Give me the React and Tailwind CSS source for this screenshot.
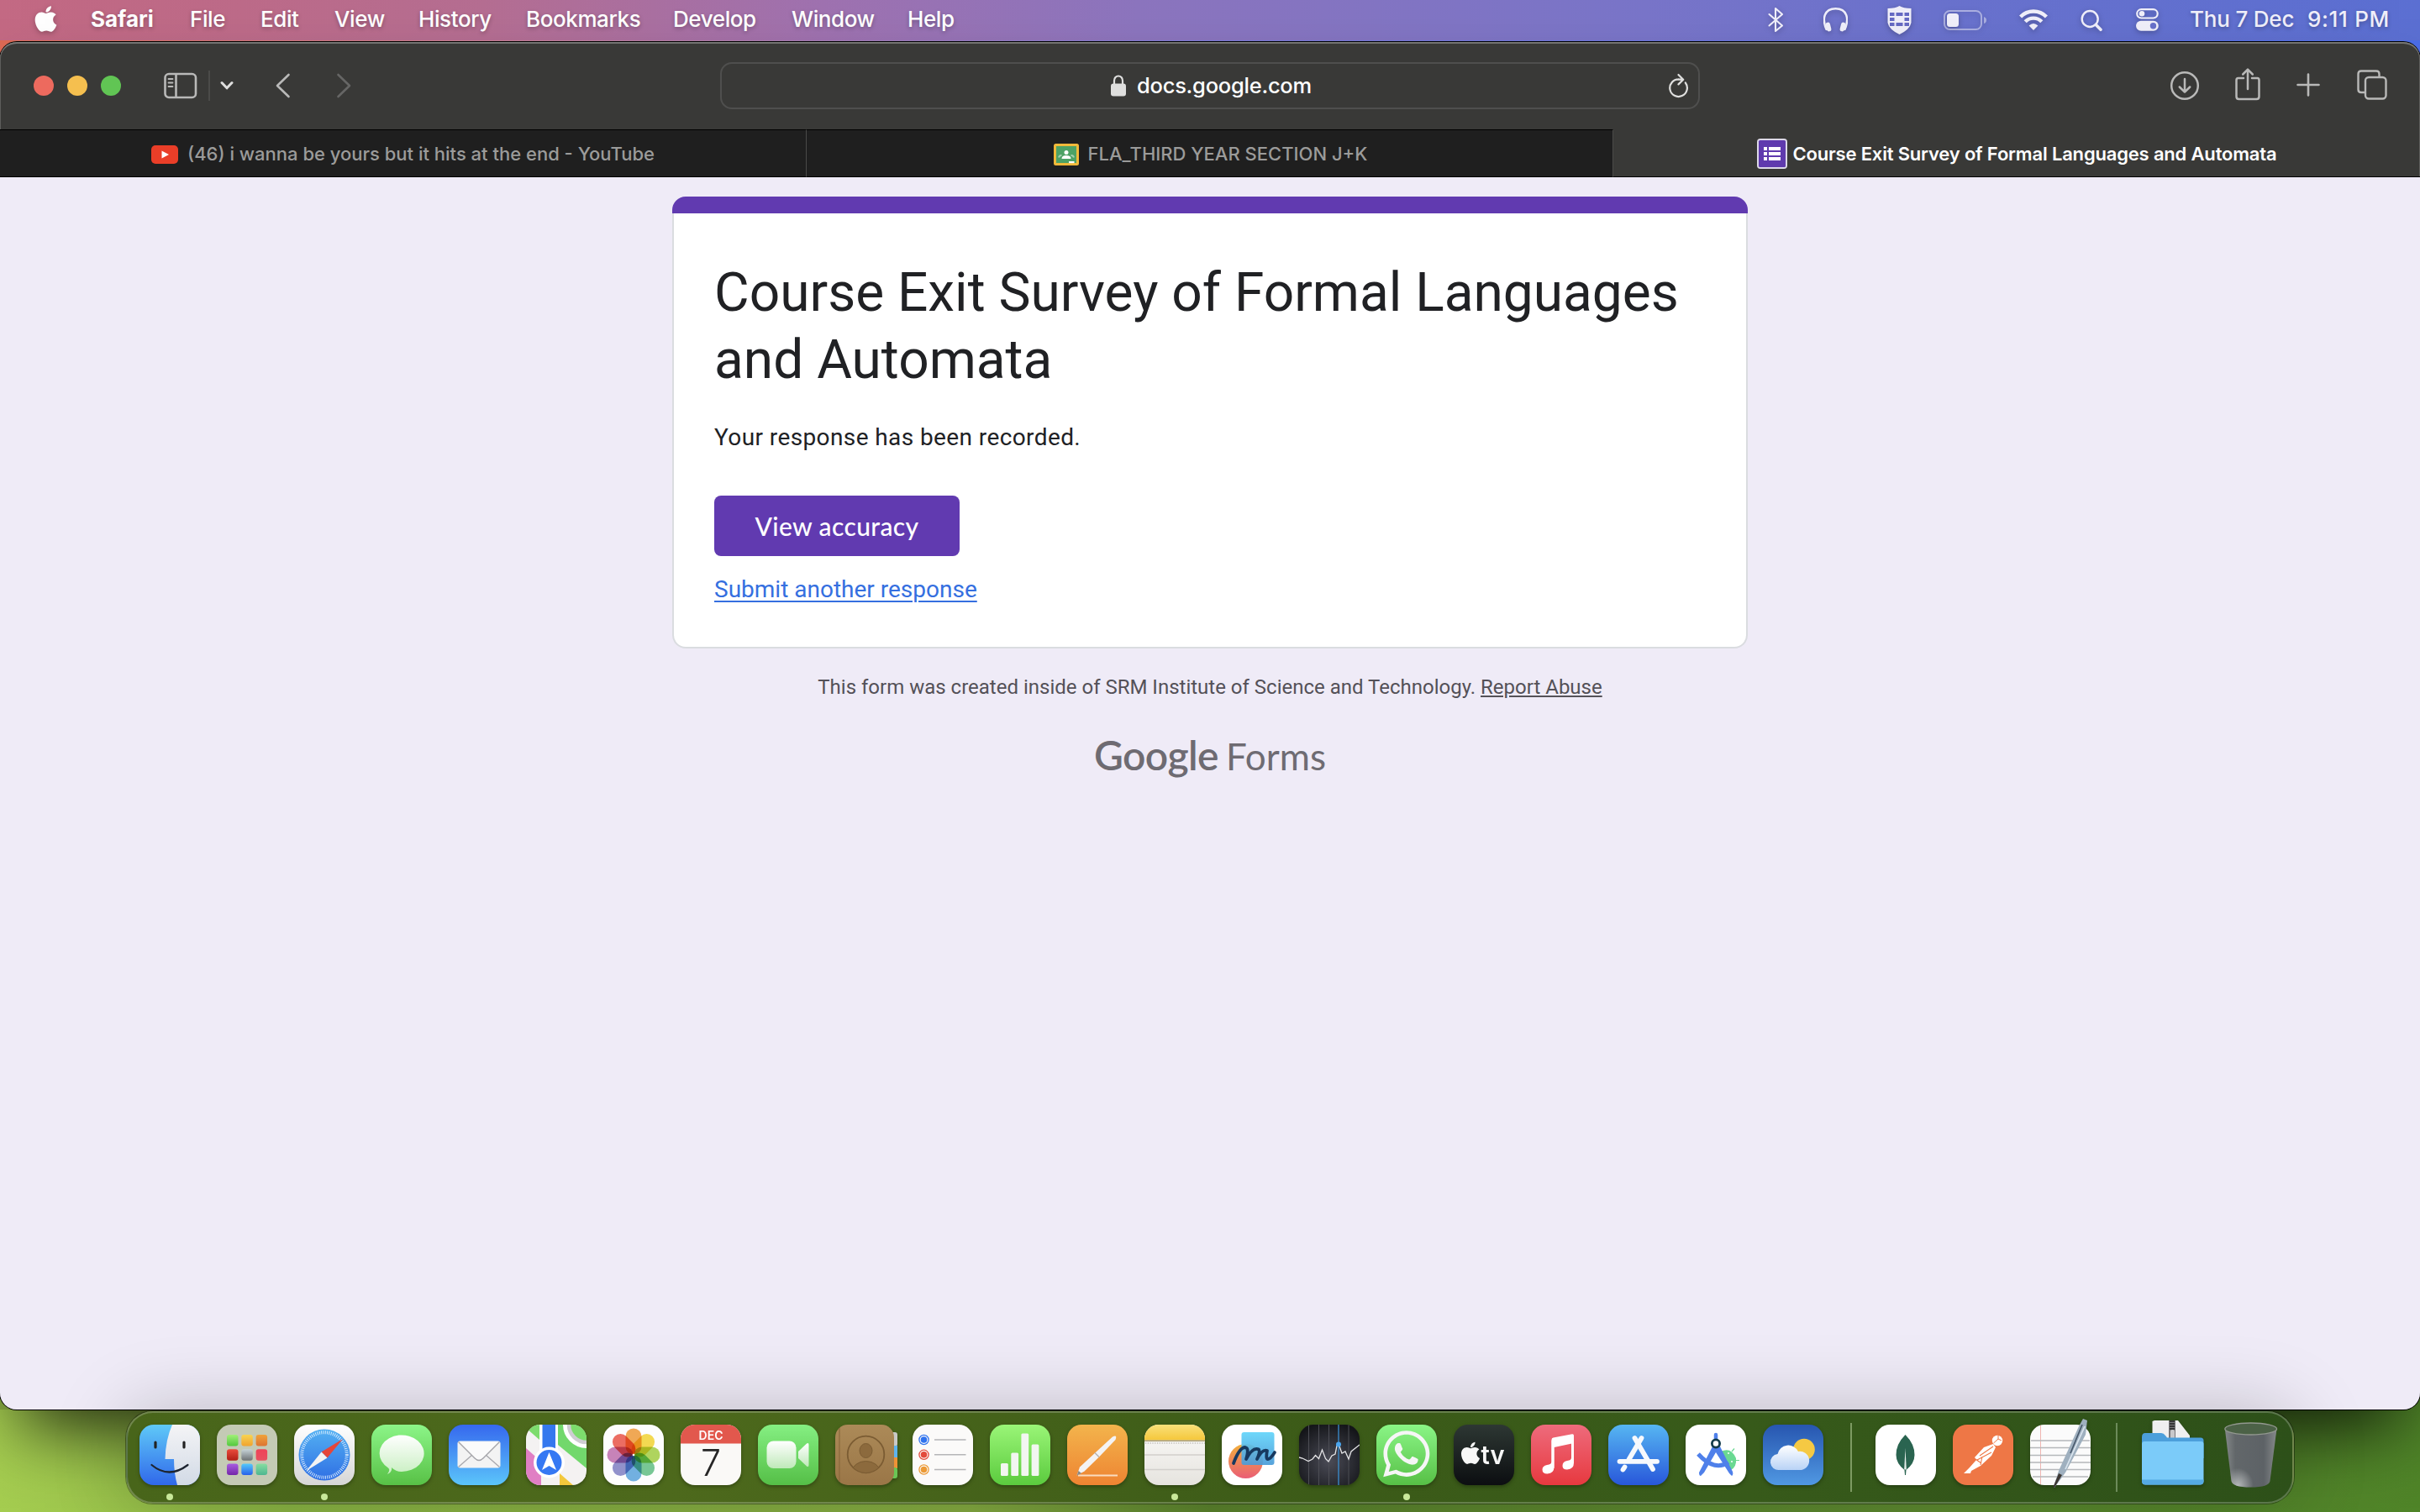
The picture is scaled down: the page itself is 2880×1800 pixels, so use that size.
import React from "react";
import { FaApple, FaWhatsapp } from "react-icons/fa";

const MENUS = [
  ["File", "w-[84px]"],
  ["Edit", "w-[88px]"],
  ["View", "w-[100px]"],
  ["History", "w-[128px]"],
  ["Bookmarks", "w-[175px]"],
  ["Develop", "w-[141px]"],
  ["Window", "w-[138px]"],
  ["Help", "w-[70px]"],
];

/* ---------- menu bar ---------- */

function StatusIcons() {
  return (
    <div className="flex h-full items-center text-[#f0effa] drop-shadow-[0_2px_3px_rgba(0,0,0,0.25)]">
      <svg className="w-[19px] mr-[47px]" viewBox="0 0 19 48" fill="none" stroke="currentColor" strokeWidth="2.1" strokeLinejoin="round" strokeLinecap="round">
        <path d="M1.5 17 L17 30.5 L9 37 V10 L17 17 L1.5 30.5" />
      </svg>
      <svg className="w-[29px] mr-[47px]" viewBox="0 0 29 48" fill="none" stroke="currentColor" strokeWidth="2.4">
        <path d="M3.5 35 C-2 22 1 10.2 14.5 10.2 C28 10.2 31 22 25.500 35" strokeLinecap="round" />
        <rect x="3.200" y="26.500" width="5.500" height="11" rx="2.750" fill="currentColor" stroke="none" transform="rotate(-14 6 32)" />
        <rect x="20.300" y="26.500" width="5.500" height="11" rx="2.750" fill="currentColor" stroke="none" transform="rotate(14 23 32)" />
      </svg>
      <svg className="w-[29px] mr-[38px]" viewBox="0 0 29 48">
        <path d="M14.500 7 Q19 10 28.500 10 V27 Q27 35 14.500 41 Q2 35 .5 27 V10 Q10 10 14.500 7Z" fill="currentColor" />
        <g fill="#666ac4">
          <rect x="3" y="15" width="5.500" height="4" /><rect x="10.500" y="15" width="8" height="4" /><rect x="20.500" y="15" width="5.500" height="4" />
          <rect x="3" y="21" width="5.500" height="4" /><rect x="20.500" y="21" width="5.500" height="4" />
          <rect x="3" y="27" width="5.500" height="4" /><rect x="10.500" y="27" width="8" height="4" /><rect x="20.500" y="27" width="5.500" height="4" />
        </g>
      </svg>
      <svg className="w-[52px] mr-[38px]" viewBox="0 0 52 48">
        <rect x="1" y="13" width="44" height="22" rx="6.500" fill="none" stroke="currentColor" strokeOpacity=".5" strokeWidth="2" />
        <rect x="4" y="16" width="14" height="16" rx="3.500" fill="currentColor" />
        <path d="M48 20 Q51 21 51 24 Q51 27 48 28Z" fill="currentColor" fillOpacity=".5" />
      </svg>
      <svg className="w-[34px] mr-[39px]" viewBox="0 0 34 48" fill="none" stroke="currentColor" strokeWidth="4.400">
        <path d="M1.600 20 A21.500 21.500 0 0 1 32.400 20" />
        <path d="M7.200 25.700 A13.800 13.800 0 0 1 26.800 25.700" />
        <path d="M17 36 L11.600 30.600 Q17 25.600 22.400 30.600Z" fill="currentColor" stroke="none" />
      </svg>
      <svg className="w-[26px] mr-[40px]" viewBox="0 0 26 48" fill="none" stroke="currentColor" strokeLinecap="round">
        <circle cx="11.200" cy="22.500" r="9.500" strokeWidth="2.400" />
        <path d="M18.300 29.500 L24 35.300" strokeWidth="3.600" />
      </svg>
      <svg className="w-[27px]" viewBox="0 0 27 48">
        <rect x="1.200" y="11.200" width="24.500" height="10.300" rx="5.150" fill="none" stroke="currentColor" strokeWidth="2.200" />
        <circle cx="7" cy="16.300" r="3.300" fill="currentColor" />
        <rect x="0" y="24.800" width="26.800" height="12" rx="6" fill="currentColor" />
        <circle cx="20.500" cy="30.800" r="3.700" fill="#6871cb" />
      </svg>
    </div>
  );
}

function MenuBar() {
  return (
    <div className="flex h-[48px] w-full items-center pl-[41px] pr-[36px] text-[26px] font-medium text-white bg-[linear-gradient(90deg,#c36983_0%,#bd6b89_10%,#b56e92_20%,#9f72b0_34%,#8c75be_47%,#7975c9_68%,#6a72cd_80%,#5b6fd2_100%)] [text-shadow:0_2px_5px_rgba(0,0,0,0.28)]">
      <FaApple className="h-[35px] w-[27px] -mt-[3px] drop-shadow-[0_2px_3px_rgba(0,0,0,0.25)]" />
      <div className="-mt-[2px] ml-[40px] w-[118px] font-bold leading-[48px]">Safari</div>
      {MENUS.map(([m, w]) => (
        <div key={m} className={`${w} -mt-[2px] leading-[48px] whitespace-nowrap tracking-[-0.4px]`}>{m}</div>
      ))}
      <div className="flex-1" />
      <StatusIcons />
      <div className="-mt-[2px] ml-[37px] flex w-[238px] justify-between leading-[48px] text-[#f0effa] whitespace-nowrap">
        <span className="tracking-[-0.2px]">Thu 7 Dec</span>
        <span className="tracking-[0.7px]">9:11 PM</span>
      </div>
    </div>
  );
}

/* ---------- browser chrome ---------- */

function Toolbar() {
  return (
    <div className="flex h-[102px] items-center pb-[3px] text-[#b9b9b8]">
      <div className="ml-[40px] flex gap-[16px]">
        <div className="size-[24px] rounded-full bg-[#ed6a5e]" />
        <div className="size-[24px] rounded-full bg-[#f5bf4f]" />
        <div className="size-[24px] rounded-full bg-[#61c554]" />
      </div>
      <svg className="ml-[51px] w-[40px]" viewBox="0 0 40 32" fill="none" stroke="currentColor" strokeWidth="2.600">
        <rect x="1.500" y="2" width="36.500" height="28" rx="4.500" />
        <path d="M14.500 2 V30" />
        <path d="M5.500 8 H10.500 M5.500 12.500 H10.500 M5.500 17 H10.500" strokeWidth="1.800" strokeLinecap="round" />
      </svg>
      <div className="ml-[13px] h-[36px] w-[2px] bg-[#4b4b49]" />
      <svg className="ml-[12px] w-[16px]" viewBox="0 0 16 12" fill="none" stroke="#dededd" strokeWidth="3" strokeLinecap="round" strokeLinejoin="round"><path d="M2 2.500 L8 8.800 L14 2.500" /></svg>
      <svg className="ml-[50px] w-[18px]" viewBox="0 0 18 30" fill="none" stroke="currentColor" strokeWidth="2.600" strokeLinecap="round" strokeLinejoin="round"><path d="M15.500 2 L2 15 L15.500 28" /></svg>
      <svg className="ml-[54px] w-[18px]" viewBox="0 0 18 30" fill="none" stroke="#666665" strokeWidth="2.600" strokeLinecap="round" strokeLinejoin="round"><path d="M2.500 2 L16 15 L2.500 28" /></svg>
      <div className="ml-[439px] flex h-[56px] w-[1166px] items-center rounded-[14px] border-2 border-[#4f4f4e] pl-[463px] pr-[11px]">
        <svg className="w-[18px]" viewBox="0 0 18 26">
          <path d="M4 12 V7 A5 5.500 0 0 1 14 7 V12" fill="none" stroke="#dfdfde" strokeWidth="2.200" />
          <rect x="0" y="10.500" width="18" height="15" rx="3" fill="#dfdfde" />
        </svg>
        <span className="ml-[13px] flex-1 pt-[1px] text-[25.500px] font-medium leading-[52px] tracking-[-0.250px] text-white">docs.google.com</span>
        <svg className="w-[25px]" viewBox="0 0 25 30" fill="none" stroke="#dfdfde" strokeWidth="2.200" strokeLinecap="round" strokeLinejoin="round">
          <path d="M20.800 11.500 A10.300 10.300 0 1 1 13 7.400 M12.500 7.400 L17.500 7.600 M12.500 2 L18.200 7.700 L12.500 13.400" />
        </svg>
      </div>
      <div className="ml-auto mr-[39px] flex h-full items-center">
        <svg className="w-[36px]" viewBox="0 0 36 36" fill="none" stroke="currentColor" strokeWidth="2.500" strokeLinecap="round" strokeLinejoin="round">
          <circle cx="18" cy="18" r="15.800" /><path d="M18 10 V25.500 M11.800 19.500 L18 25.700 L24.200 19.500" />
        </svg>
        <svg className="-mt-[2px] ml-[41px] w-[32px]" viewBox="0 0 32 42" fill="none" stroke="currentColor" strokeWidth="2.500" strokeLinecap="round" strokeLinejoin="round">
          <path d="M11 13 H4.500 Q2.500 13 2.500 15.500 V35 Q2.500 38 5.500 38 H26.500 Q29.500 38 29.500 35 V15.500 Q29.500 13 27.500 13 H21 M16 26 V3 M10.200 8.500 L16 2.700 L21.800 8.500" />
        </svg>
        <svg className="-mt-[2px] ml-[42px] w-[28px]" viewBox="0 0 28 28" fill="none" stroke="currentColor" strokeWidth="2.600" strokeLinecap="round"><path d="M14 1.500 V26.500 M1.500 14 H26.500" /></svg>
        <svg className="-mt-[2px] ml-[44px] w-[36px]" viewBox="0 0 36 36" fill="none" stroke="currentColor" strokeWidth="2.400">
          <rect x="10" y="9" width="24.500" height="25.500" rx="4" />
          <path d="M10 27 H5 Q1.500 27 1.500 23.500 V5 Q1.500 1.500 5 1.500 H23 Q26.500 1.500 26.500 5 V9" />
        </svg>
      </div>
    </div>
  );
}

function Tabs() {
  return (
    <div className="flex h-[57px] text-[22px] font-medium text-[#9b9b9a]">
      <div className="flex w-[960px] items-center justify-center border-b border-r border-t border-b-black border-t-black border-r-[#4a4a49] bg-[#1f1f1f] pt-[2px]">
        <svg className="w-[32px]" viewBox="0 0 32 22"><rect width="32" height="22" rx="5" fill="#ea3e28" /><path d="M12.500 6.500 L21 11 L12.500 15.500Z" fill="#fff" /></svg>
        <span className="ml-[11px]">(46) i wanna be yours but it hits at the end - YouTube</span>
      </div>
      <div className="flex w-[960px] items-center justify-center border-b border-r border-t border-b-black border-t-black border-r-[#4a4a49] bg-[#1f1f1f] pl-[2px] pt-[2px]">
        <svg className="w-[30px]" viewBox="0 0 30 26">
          <rect width="30" height="26" rx="2.500" fill="#f0b93a" /><rect x="3" y="3" width="24" height="20" fill="#4da265" />
          <circle cx="15" cy="10.500" r="2.500" fill="#fff" /><path d="M9.500 18 Q9.500 14 15 14 Q20.500 14 20.500 18Z" fill="#fff" />
          <path d="M6 16.500 Q7 13.500 9.500 14 M24 16.500 Q23 13.500 20.500 14" stroke="#a5d0b0" strokeWidth="2" fill="none" />
          <rect x="18" y="21" width="6.500" height="2.200" fill="#fff" />
        </svg>
        <span className="ml-[11px]">FLA_THIRD YEAR SECTION J+K</span>
      </div>
      <div className="flex flex-1 items-center justify-center border-b border-b-black pt-[2px] text-white">
        <svg className="w-[36px]" viewBox="0 0 36 36">
          <rect width="36" height="36" rx="4" fill="#dcd8e8" /><rect x="2" y="2" width="32" height="32" rx="1.500" fill="#5f3aae" />
          <path d="M8 10 h4 v4 h-4z M8 16 h4 v4 h-4z M8 22 h4 v4 h-4z M14 10 h14 v4 h-14z M14 16 h14 v4 h-14z M14 22 h14 v4 h-14z" fill="#fff" />
        </svg>
        <span className="ml-[7px] font-semibold tracking-[-0.180px]">Course Exit Survey of Formal Languages and Automata</span>
      </div>
    </div>
  );
}

/* ---------- form page ---------- */

function FormPage() {
  return (
    <div className="flex flex-1 flex-col items-center bg-[#efebf7] pt-[23px] font-[Roboto,sans-serif]">
      <div className="w-[1280px]">
        <div className="h-[20px] rounded-t-[16px] bg-[#613ab0]" />
        <div className="flex h-[518px] flex-col items-start rounded-b-[16px] border-2 border-t-0 border-[#dadce0] bg-white px-[48px] pt-[55px]">
          <h1 className="w-[1184px] text-[64px] leading-[80px] text-[#202124]">Course Exit Survey of Formal Languages and Automata</h1>
          <p className="mt-[32px] text-[28px] leading-[40px] tracking-[0.400px] text-[#202124]">Your response has been recorded.</p>
          <div className="mt-[49px] flex h-[72px] w-[292px] items-center justify-center rounded-[8px] bg-[#613ab0] font-[Lato,sans-serif] text-[30px] font-medium tracking-[0.400px] text-white">View accuracy</div>
          <a className="mt-[20px] text-[28px] leading-[40px] text-[#356fe0] underline decoration-[2px] underline-offset-[4px]">Submit another response</a>
        </div>
      </div>
      <p className="mt-[29px] text-[24px] leading-[34px] text-[#545158]">This form was created inside of SRM Institute of Science and Technology. <a className="underline">Report Abuse</a></p>
      <div className="mt-[34px] flex items-baseline gap-[9px] font-[Lato,sans-serif] text-[44px] leading-[60px] text-[#6e6b72]">
        <span className="text-[48px] font-semibold tracking-[-0.600px]">Google</span><span>Forms</span>
      </div>
    </div>
  );
}

/* ---------- dock ---------- */

function Icon({ children, clip = true }) {
  return (
    <svg className={`size-[72px] shrink-0 drop-shadow-[0_2px_2px_rgba(0,0,0,0.3)] ${clip ? "rounded-[17px]" : "overflow-visible"}`} viewBox="0 0 72 72">
      {children}
    </svg>
  );
}

function Grad({ id, a, b }) {
  return (
    <linearGradient id={id} x1="0" y1="0" x2="0" y2="1">
      <stop offset="0" stopColor={a} /><stop offset="1" stopColor={b} />
    </linearGradient>
  );
}

const Finder = () => (
  <Icon>
    <Grad id="fa" a="#5fc9f8" b="#3068ea" /><Grad id="fb" a="#f4f4f6" b="#d2dae6" />
    <rect width="72" height="72" fill="url(#fa)" />
    <path d="M39 0 Q31 18 30.500 41 H41 Q41 58 45 72 H72 V0Z" fill="url(#fb)" />
    <path d="M19 21 V27 M53 21 V27" stroke="#222" strokeWidth="3.200" strokeLinecap="round" />
    <path d="M14.500 48 Q35 65 57.500 48" stroke="#1d2430" strokeWidth="2.200" fill="none" strokeLinecap="round" />
  </Icon>
);

const PAD = [["#a1f078", "#53c83f"], ["#f8d451", "#f0a32f"], ["#f0a33a", "#dd7433"], ["#ea4b3c", "#b11f16"], ["#c7d3d8", "#6d7274"], ["#ee4358", "#e8505f"], ["#a85ce0", "#7327a8"], ["#55c9fa", "#2760ea"], ["#86dda0", "#4db690"]];
const Launchpad = () => (
  <Icon>
    <rect width="72" height="72" fill="#c4cab5" />
    {PAD.map(([a, b], i) => (
      <g key={i}><Grad id={`lp${i}`} a={a} b={b} /><rect x={12 + (i % 3) * 17.300} y={12 + Math.floor(i / 3) * 17.300} width="13.500" height="13.500" rx="3" fill={`url(#lp${i})`} /></g>
    ))}
  </Icon>
);

const SafariIcon = () => (
  <Icon>
    <Grad id="sa" a="#ffffff" b="#d6d6d6" /><Grad id="sb" a="#53b0f2" b="#2f6fe4" />
    <rect width="72" height="72" fill="url(#sa)" /><circle cx="36" cy="36" r="30.500" fill="url(#sb)" />
    <circle cx="36" cy="36" r="26.800" fill="none" stroke="#dff0ff" strokeWidth="4" strokeDasharray=".9 1.440" />
    <path d="M58 17 L39.500 39.500 L32.500 32.500Z" fill="#e5463a" /><path d="M14.500 55 L39.500 39.500 L32.500 32.500Z" fill="#f3f3f3" />
  </Icon>
);

const Messages = () => (
  <Icon>
    <Grad id="ma" a="#8cf588" b="#58c146" /><Grad id="mb" a="#ffffff" b="#c9efc2" />
    <rect width="72" height="72" fill="url(#ma)" />
    <path d="M19 59 Q25 56 24 51 Q29 56 35.500 56 A26.500 21.800 0 1 0 20 51.500 Q23 54 19 59Z" fill="url(#mb)" />
  </Icon>
);

const Mail = () => (
  <Icon>
    <Grad id="mla" a="#3668ee" b="#5bc5fa" />
    <rect width="72" height="72" fill="url(#mla)" /><rect x="10.500" y="19.500" width="51" height="32" rx="3" fill="#f3f3f3" />
    <path d="M11.500 50.500 L28 36 M60.500 50.500 L44 36" stroke="#aaaaaf" strokeWidth="1.400" />
    <path d="M11.500 20.500 L31 40 Q36 45 41 40 L60.500 20.500" fill="#fbfbfb" stroke="#a3a3a8" strokeWidth="1.400" />
  </Icon>
);

const Maps = () => (
  <Icon>
    <rect width="72" height="72" fill="#f4f2f2" />
    <path d="M0 4 L16 18 V0 H0Z" fill="#7ddc6d" /><path d="M38 0 H72 V52 L38 24Z" fill="#72d86c" />
    <path d="M0 28 L18 44 V72 H0Z" fill="#e07fc4" /><path d="M40 72 V58 L56 72Z" fill="#f3c83c" />
    <path d="M36 46 L72 72 L72 62 L36 34Z" fill="#f4f2f2" />
    <circle cx="72" cy="0" r="25" fill="none" stroke="#fff" strokeWidth="6" /><circle cx="72" cy="0" r="21" fill="#7ddc6d" stroke="#cfcdd2" strokeWidth="4.500" />
    <rect x="16" y="0" width="22" height="40" fill="#fff" /><rect x="19.500" y="0" width="15.500" height="40" fill="#3578ee" />
    <circle cx="27.500" cy="45" r="18.500" fill="#fff" /><circle cx="27.500" cy="45" r="15" fill="#3578f3" />
    <path d="M27.500 33 L36 54 L27.500 49 L19 54Z" fill="#fff" />
  </Icon>
);

const PETALS = ["#f09a38", "#f3d532", "#a3cf43", "#62c084", "#5aa4dd", "#7f7fc4", "#c06fae", "#ea5548"];
const Photos = () => (
  <Icon>
    <rect width="72" height="72" fill="#fdfdfd" />
    {PETALS.map((c, i) => (
      <rect key={c} x="26.500" y="4.500" width="19" height="31" rx="9.500" fill={c} fillOpacity=".85" transform={`rotate(${i * 45} 36 36)`} className="mix-blend-multiply" />
    ))}
    <circle cx="36" cy="36" r="1.300" fill="#fff" />
  </Icon>
);

const Calendar = () => (
  <Icon>
    <rect width="72" height="72" fill="#faf9f7" /><rect width="72" height="22.500" fill="#e2584d" />
    <text x="36" y="17.500" fontSize="14" fontWeight="600" fill="#fff" textAnchor="middle" fontFamily="Inter">DEC</text>
    <text x="36" y="60.500" fontSize="43" fontWeight="300" fill="#262626" textAnchor="middle" fontFamily="Inter">7</text>
  </Icon>
);

const FaceTime = () => (
  <Icon>
    <Grad id="fta" a="#85ef82" b="#55bf47" /><Grad id="ftb" a="#ffffff" b="#bfe9b9" />
    <rect width="72" height="72" fill="url(#fta)" /><rect x="10.500" y="19.500" width="35" height="32.500" rx="8" fill="url(#ftb)" />
    <path d="M48 32 L58 22.500 Q60.500 21 60.500 24 V48 Q60.500 51 58 49.500 L48 40Z" fill="url(#ftb)" />
  </Icon>
);

const Contacts = () => (
  <Icon clip={false}>
    <rect x="62" y="9" width="12" height="17" rx="3" fill="#c9c9c7" /><rect x="62" y="25" width="12" height="15" fill="#5db4ee" />
    <rect x="62" y="39" width="12" height="13" fill="#ef9236" /><rect x="62" y="51" width="12" height="13" rx="3" fill="#6ac655" />
    <Grad id="ca" a="#ac8a58" b="#9a7647" /><rect width="70" height="72" rx="15" fill="url(#ca)" />
    <path d="M5 4 V68" stroke="#8a683c" strokeWidth="1.200" />
    <clipPath id="cc"><circle cx="36.500" cy="35.500" r="21.500" /></clipPath>
    <circle cx="36.500" cy="35.500" r="21.800" fill="none" stroke="#7b5c33" strokeWidth="1.800" />
    <g fill="#8c6a3d" stroke="#7b5c33" clipPath="url(#cc)"><ellipse cx="36.500" cy="31" rx="7.500" ry="8.500" /><ellipse cx="36.500" cy="57" rx="17" ry="13.500" /></g>
  </Icon>
);

const Reminders = () => (
  <Icon>
    <rect width="72" height="72" fill="#fbfaf9" />
    {[["#2f73ee", 18], ["#e34a3c", 35.800], ["#ec9a36", 53.500]].map(([c, y]) => (
      <g key={c}><circle cx="13.500" cy={y} r="5.600" fill="none" stroke={c} strokeWidth="1.300" /><circle cx="13.500" cy={y} r="3.800" fill={c} /><path d={`M26 ${y} H63.500`} stroke="#b5b5b7" strokeWidth="1.400" /></g>
    ))}
  </Icon>
);

const Numbers = () => (
  <Icon>
    <Grad id="na" a="#9af577" b="#5bcb3e" /><rect width="72" height="72" fill="url(#na)" />
    <g fill="#f2f6f1"><rect x="13" y="46" width="8.800" height="15" rx="1.500" /><rect x="25.300" y="33.500" width="8.800" height="27.500" rx="1.500" /><rect x="37.400" y="10.500" width="8.800" height="50.500" rx="1.500" /><rect x="49.600" y="23.500" width="8.800" height="37.500" rx="1.500" /></g>
  </Icon>
);

const Pages = () => (
  <Icon>
    <Grad id="pa" a="#f3b44c" b="#ee8432" /><rect width="72" height="72" fill="url(#pa)" />
    <path d="M13 60.500 H60" stroke="#f9dcc0" strokeWidth="2.200" />
    <path d="M11.500 60.500 L15 50.500 L35 32 L54 14.500 Q60 11.500 57.500 18 L38 38.500 L20.500 55.500Z" fill="#f4f3f4" />
    <path d="M11.500 60.500 L13.500 55 L17 58Z" fill="#8d8a86" /><path d="M33 33.500 L38 38.500" stroke="#b6b3b1" strokeWidth="1.500" />
  </Icon>
);

const Notes = () => (
  <Icon>
    <Grad id="noa" a="#f9e07a" b="#f5c73a" /><Grad id="nob" a="#fbfaf8" b="#e6e4df" />
    <rect width="72" height="72" fill="url(#nob)" /><rect width="72" height="18.500" fill="url(#noa)" />
    <path d="M0 19.300 H72" stroke="#a89a6e" strokeWidth="1.400" /><path d="M1 22 H72" stroke="#bcbab5" strokeWidth="1.600" strokeDasharray="1.200 1.600" />
    <path d="M0 36 H72 M0 53.500 H72" stroke="#d2d0cc" strokeWidth="1.600" />
  </Icon>
);

const Freeform = () => (
  <Icon>
    <Grad id="ffa" a="#f2b03c" b="#ea5d75" /><Grad id="ffb" a="#62d4fa" b="#4a9bd8" />
    <rect width="72" height="72" fill="#fff" /><circle cx="28.500" cy="43.500" r="20.500" fill="url(#ffa)" /><rect x="23.500" y="9" width="39" height="39" rx="3" fill="url(#ffb)" fillOpacity=".92" />
    <path d="M14 46 Q21 27 28 27 Q33 28 29 41 Q37 26 44 29.500 Q46 32 42 41 Q48 29 54 31 Q52 41 55 41 Q58 41 63 33" fill="none" stroke="#17395f" strokeWidth="3.800" strokeLinecap="round" strokeLinejoin="round" />
  </Icon>
);

const Stocks = () => (
  <Icon>
    <radialGradient id="sta" cx=".5" cy=".6" r=".65"><stop offset="0" stopColor="#4b4c57" /><stop offset="1" stopColor="#141519" /></radialGradient>
    <rect width="72" height="72" fill="url(#sta)" />
    <path d="M11.500 0 V72 M23.500 0 V72 M35.500 0 V72 M59 0 V72" stroke="#4d4e55" strokeWidth="1" />
    <path d="M47 0 V72" stroke="#3b8fd2" strokeWidth="1.300" />
    <path d="M0 39 L4 40 L11 43.500 L16 41 L19.500 36.500 L23.500 40.500 L27.500 30 L31.500 40.500 L35 44 L39 37 L43 35 L45 25 L47 23 L51 34 L55 32 L59 41 L62 32 L72 24" fill="none" stroke="#e4e4e6" strokeWidth="1.300" />
    <circle cx="47" cy="23.500" r="3" fill="#4aa5ee" />
  </Icon>
);

const WhatsApp = () => (
  <Icon>
    <Grad id="wa" a="#8af586" b="#57c046" /><rect width="72" height="72" fill="url(#wa)" />
    <FaWhatsapp x="4.300" y="3.300" size="63" color="#f6f6f6" />
  </Icon>
);

const TV = () => (
  <Icon>
    <Grad id="tva" a="#2d3733" b="#0c0e11" /><rect width="72" height="72" fill="url(#tva)" />
    <FaApple x="5" y="18.800" size="30" color="#f7f7f7" />
    <text x="32.500" y="46.500" fontSize="31" fontWeight="600" fill="#f7f7f7" fontFamily="Inter" textLength="28" lengthAdjust="spacingAndGlyphs">tv</text>
  </Icon>
);

const Music = () => (
  <Icon>
    <Grad id="mua" a="#ee6b7c" b="#e7393f" /><rect width="72" height="72" fill="url(#mua)" />
    <path d="M24.500 18 Q24.500 16 26.500 15.600 L49 11.300 Q51 11 51 13 V22 L27.500 27 V52 H24.500Z" fill="#fff" stroke="none" />
    <path d="M27.500 26.500 V50 Q27.500 58 19.500 58.500 Q13.500 58.500 13.500 53.500 Q13.500 49 19 48 Q24.500 47.500 24.500 44 V18Z M51 20 V45.500 Q51 53 43 53.500 Q37.500 53.500 37.500 49 Q37.500 44 43 43 Q48 42.500 48 39.500 V20Z" fill="#fff" />
  </Icon>
);

const AppStore = () => (
  <Icon>
    <Grad id="asa" a="#56b6f2" b="#2857da" /><rect width="72" height="72" fill="url(#asa)" />
    <g stroke="#f6f9fd" strokeWidth="5.800" strokeLinecap="round"><path d="M13.500 43.800 H58" /><path d="M39.500 16 L24.500 41.500 M19.500 50.500 L17.500 53.500" /><path d="M31.500 16 L53 53" /></g>
  </Icon>
);

const AndroidStudio = () => (
  <Icon>
    <rect width="72" height="72" fill="#fff" />
    <path d="M42 32 Q54 26 60 40 Q61 50 54 54Z" fill="#6ad992" /><path d="M55 32 L58 28.500 M60 42.500 H64" stroke="#6ad992" strokeWidth="1.200" />
    <circle cx="51" cy="34" r="1" fill="#fff" /><circle cx="55" cy="44" r="1" fill="#fff" />
    <path d="M36 12 V20" stroke="#4f80ea" strokeWidth="4.500" strokeLinecap="round" />
    <path d="M32 26 L16 57 Q16 61 18 61 L22 57 L36 33 L52 58 L55 61 Q57 60 56 56 L41 26Z" fill="#4f80ea" />
    <path d="M15 35 Q34 56 51 45" stroke="#4f80ea" strokeWidth="5" fill="none" />
    <circle cx="36" cy="22.500" r="4.600" fill="#fff" stroke="#123b4a" strokeWidth="2.800" />
  </Icon>
);

const Weather = () => (
  <Icon>
    <Grad id="wea" a="#2756b0" b="#5098e2" /><Grad id="web" a="#ffffff" b="#b9d3f6" />
    <rect width="72" height="72" fill="url(#wea)" /><circle cx="49" cy="29.500" r="12.800" fill="#f5c943" />
    <path d="M19.500 54 A9.500 9.500 0 0 1 17.500 35 A13 13 0 0 1 42 32 A11 11 0 1 1 46 54Z" fill="url(#web)" />
  </Icon>
);

const Mongo = () => (
  <Icon>
    <rect width="72" height="72" fill="#fff" />
    <path d="M35.500 12 Q46.500 23 46.500 36 Q46.500 46 36.500 54 L36 60 H35 L34.500 54 Q24.500 46 24.500 36 Q24.500 23 35.500 12Z" fill="#2a6450" />
    <path d="M35.500 28 L36.800 53.500 H34.200Z" fill="#e8f0ec" />
  </Icon>
);

const Postman = () => (
  <Icon>
    <rect width="72" height="72" fill="#ee7746" />
    <circle cx="53" cy="19" r="6.200" fill="#fff" /><path d="M48.500 22 L54 17 L58 19 M54 17 V13" stroke="#ee7746" strokeWidth="1" fill="none" />
    <path d="M48 23 L51 27 L46 37 L33 49 L22 55 L21 58 L13 58 L20 51 L28 42 L26 39 L37 27Z" fill="#fff" />
    <path d="M27 41 L34 46 M32 37 L48 26 M29 42 L46 33 M33 48 L35 38" stroke="#ee7746" strokeWidth="1.100" />
  </Icon>
);

const TextEdit = () => (
  <Icon clip={false}>
    <rect width="72" height="72" rx="17" fill="#fbfbfb" />
    <path d="M12.500 1 V71" stroke="#f0b5b0" strokeWidth="1" />
    <path d="M1 19 H71 M0 27.500 H72 M0 36.500 H72 M0 45 H72 M0 53.500 H72 M3 62 H69" stroke="#b5b8ba" strokeWidth="1.300" />
    <path d="M63 -7 L68 -5 L66 12 L42 57 L29 75 L28 74 L34 55 L58 2Z" fill="#9fb0bf" />
    <path d="M62 0 L48 34" stroke="#46576a" strokeWidth="1.600" /><path d="M65 2 L42 53" stroke="#d9e4ee" strokeWidth="1.800" />
    <path d="M34 58 L38 60 L29 75 L27.500 74Z" fill="#3d3733" />
  </Icon>
);

const Folder = () => (
  <svg className="h-[78px] w-[74px] -mt-[6px] shrink-0 overflow-visible drop-shadow-[0_2px_2px_rgba(0,0,0,0.3)]" viewBox="0 -6 74 78">
    <path d="M12.500 -4 L15 -5 H43 L57 13 V22 H12.500Z" fill="#efeff0" />
    <path d="M32 -5 H40 V22 H32Z" fill="#77777a" /><path d="M33 -4 h6 m-6 3 h6 m-6 3 h6 m-6 3 h6" stroke="#222" strokeWidth="1.500" /><rect x="34" y="6" width="5" height="16" rx="2" fill="#c8c8ca" />
    <path d="M0 15 Q0 10 4 10 H23 Q26 10 28 13 L30 15.500 H70 Q73.500 15.500 73.500 19 V40 H0Z" fill="#4c9fdb" />
    <path d="M0 23 Q0 20 3 20 H70.500 Q73.500 20 73.500 23 V67 Q73.500 71.500 69 71.500 H4.500 Q0 71.500 0 67Z" fill="#7bcbf9" />
    <path d="M0 65.500 H73.500 V68 Q73 71.500 69 71.500 H4.500 Q.5 71.500 0 68Z" fill="#55aae4" />
  </svg>
);

const Trash = () => (
  <svg className="h-[78px] w-[64px] shrink-0" viewBox="0 0 64 78">
    <linearGradient id="tr"><stop offset="0" stopColor="#85898a" /><stop offset=".2" stopColor="#62676a" /><stop offset=".75" stopColor="#5d6266" /><stop offset="1" stopColor="#85898a" /></linearGradient>
    <radialGradient id="trb" cx=".25" cy=".97" r=".3"><stop offset="0" stopColor="#c9cccd" stopOpacity=".8" /><stop offset="1" stopColor="#c9cccd" stopOpacity="0" /></radialGradient>
    <path d="M.8 8 L8.500 70 Q9.500 77.500 31.500 77.500 Q53.500 77.500 54.500 70 L62.500 8Z" fill="url(#tr)" />
    <path d="M.8 8 L8.500 70 Q9.500 77.500 31.500 77.500 Q53.500 77.500 54.500 70 L62.500 8Z" fill="url(#trb)" />
    <ellipse cx="31.700" cy="8" rx="30.900" ry="7" fill="#4c6247" stroke="#92988f" strokeWidth="1.300" />
  </svg>
);

const APPS = [
  [Finder, true], [Launchpad], [SafariIcon, true], [Messages], [Mail], [Maps], [Photos], [Calendar], [FaceTime], [Contacts], [Reminders],
  [Numbers], [Pages], [Notes, true], [Freeform], [Stocks], [WhatsApp, true], [TV], [Music], [AppStore], [AndroidStudio], [Weather],
];

function Dock() {
  return (
    <div className="relative z-10 flex h-[110px] w-[2580px] items-start rounded-[32px] border-2 border-[#ffffff38] bg-[linear-gradient(90deg,#48651a_0%,#4d691c_25%,#3c5b18_55%,#375a1a_75%,#2d5019_100%)] pl-[14px] pt-[14px] shadow-[0_0_0_1px_rgba(0,0,0,0.35),0_0_90px_rgba(0,0,0,0.22)]">
      <div className="flex gap-[20px]">
        {APPS.map(([App, running], i) => (
          <div key={i} className="flex w-[72px] flex-col items-center gap-[10px]">
            <App />
            {running && <div className="size-[8px] rounded-full bg-[#c9e89a]" />}
          </div>
        ))}
      </div>
      <div className="ml-[32px] -mt-[2px] h-[82px] w-[2px] bg-[#7d9a62]" />
      <div className="ml-[28px] flex gap-[20px]"><Mongo /><Postman /><TextEdit /></div>
      <div className="ml-[30px] -mt-[2px] h-[82px] w-[2px] bg-[#6c8b5a]" />
      <div className="ml-[29px] flex items-start"><Folder /><div className="ml-[24px] -mt-[3px]"><Trash /></div></div>
    </div>
  );
}

export default function App() {
  return (
    <div className="flex h-[1800px] w-[2880px] flex-col overflow-hidden bg-[#8db845] font-[Inter,sans-serif]">
      <MenuBar />
      <div className="flex h-[1630px] w-full shrink-0 flex-col bg-no-repeat pt-[2px] [background-image:linear-gradient(90deg,#dc6a54_0%,#c97f93_20%,#7a7ad8_50%,#4b6de8_100%),linear-gradient(90deg,#8fb545_0%,#4f8428_100%)] [background-size:100%_60px,100%_100%]">
        <div className="relative flex flex-1 flex-col overflow-hidden rounded-[20px] bg-[#393937] pt-[2px] shadow-[0_0_0_1px_#000,0_45px_80px_-25px_rgba(0,0,0,0.8),inset_0_2px_0_#757573,inset_1px_0_0_#5d5d5b,inset_-1px_0_0_#5d5d5b]">
          <Toolbar />
          <Tabs />
          <FormPage />
        </div>
      </div>
      <div className="flex flex-1 justify-center bg-[linear-gradient(90deg,#a5cd50_0%,#8db845_12%,#86ad42_40%,#5c852e_50%,#5f8d31_80%,#4f8428_100%)] pt-[2px]">
        <Dock />
      </div>
    </div>
  );
}
